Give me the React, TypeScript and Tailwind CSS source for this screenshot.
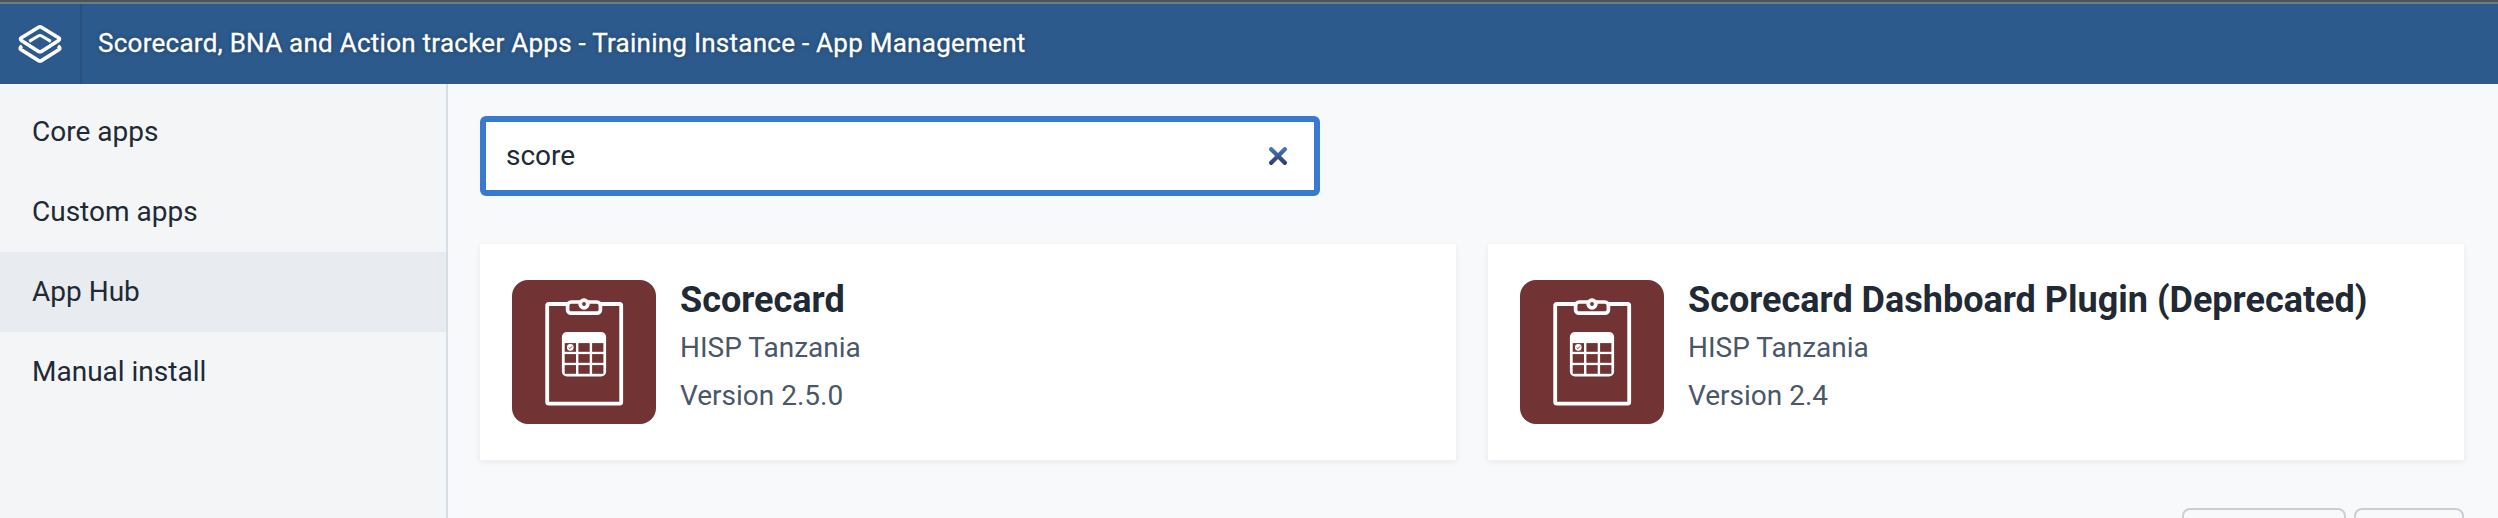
import React from "react";

const navItems = ["Core apps", "Custom apps", "App Hub", "Manual install"];
const apps = [
  { name: "Scorecard", author: "HISP Tanzania", version: "Version 2.5.0" },
  { name: "Scorecard Dashboard Plugin (Deprecated)", author: "HISP Tanzania", version: "Version 2.4" },
];

function Logo() {
  return (
    <svg width="48" height="48" viewBox="16 20 48 48" fill="none" stroke="#fff" strokeWidth="3.6" strokeLinejoin="round">
      <path d="M38.6 27.2Q40 26.4 41.4 27.2L58.6 37.8Q60.4 39.1 58.6 40.4L41.4 51.4Q40 52.2 38.6 51.4L21.4 40.4Q19.6 39.1 21.4 37.8Z" />
      <path d="M29.2 41.4L38.8 35.7Q40 35.1 41.2 35.7L50.8 41.4" strokeWidth="3" />
      <path d="M22 46Q18.8 48.2 21.2 49.8L38.6 60.6Q40 61.4 41.4 60.6L58.8 49.8Q61.2 48.2 58 46" />
    </svg>
  );
}

function ScorecardIcon() {
  const cols = [52.7, 66.4, 80.1];
  const rows = [63.1, 74.1, 85.1];
  return (
    <svg className="shrink-0" width="144" height="144" viewBox="0 0 144 144">
      <rect width="144" height="144" rx="16" fill="#713333" />
      <rect x="35.2" y="24" width="74" height="99.7" rx="1.6" fill="none" stroke="#fff" strokeWidth="3.8" />
      <rect x="55.6" y="22" width="32.8" height="11.2" rx="3.4" fill="#713333" stroke="#fff" strokeWidth="3.7" />
      <circle cx="72" cy="24" r="3.8" fill="#713333" stroke="#fff" strokeWidth="3.8" />
      <rect x="49.9" y="52" width="44.2" height="44.4" rx="5" fill="#fff" />
      {rows.map((y) => cols.map((x) => <rect key={`${x}-${y}`} x={x} y={y} width="11.3" height="8.7" fill="#713333" />))}
      <circle cx="58.3" cy="67.4" r="3.3" fill="#fff" />
      <path d="M56.6 67.5l1.2 1.2 2.3-2.5" fill="none" stroke="#713333" strokeWidth="0.9" />
    </svg>
  );
}

export default function App() {
  return (
    <div className="flex h-[518px] w-full flex-col overflow-hidden bg-[#f8f9fb] font-['Roboto',sans-serif] text-[28px] text-[#212934]">
      <header className="flex h-[84px] shrink-0 border-t-2 border-[#48555c] bg-[#2c5a8c]">
        <div className="flex w-full border-t-2 border-[#6f7d7f]">
          <div className="flex w-[82px] items-center justify-center border-r-2 border-[#28517e]">
            <Logo />
          </div>
          <h1 className="flex items-center pb-0.5 pl-4 text-[26px] font-normal tracking-[0.01em] text-white [-webkit-text-stroke:0.3px_white] [text-shadow:0_0_4px_rgba(0,0,0,0.35)]">
            Scorecard, BNA and Action tracker Apps - Training Instance - App Management
          </h1>
        </div>
      </header>
      <div className="flex min-h-0 flex-1">
        <nav className="w-[448px] shrink-0 border-r-2 border-[#d5dde5] bg-[#f3f5f7] pt-2">
          {navItems.map((item) => (
            <a key={item} className={item === "App Hub" ? "flex h-20 items-center bg-[#e8ebf0] px-8" : "flex h-20 items-center px-8"}>
              {item}
            </a>
          ))}
        </nav>
        <main className="flex-1 pl-8 pr-[34px] pt-8">
          <div className="flex h-20 w-[840px] items-center justify-between rounded-md border-6 border-[#3a79d0] bg-white pl-5 pr-[27px]">
            <span>score</span>
            <svg width="18" height="18" viewBox="0 0 18 18" fill="none">
              <defs>
                <linearGradient id="clear" x1="0" y1="0" x2="0" y2="18" gradientUnits="userSpaceOnUse">
                  <stop stopColor="#4a7ac4" />
                  <stop offset="1" stopColor="#2b3966" />
                </linearGradient>
              </defs>
              <path d="M2.2 2.2l13.6 13.6M15.8 2.2L2.2 15.8" stroke="url(#clear)" strokeWidth="4.3" strokeLinecap="round" />
            </svg>
          </div>
          <div className="mt-12 grid grid-cols-2 gap-8">
            {apps.map((app) => (
              <article key={app.name} className="flex h-[216px] items-center gap-6 bg-white px-8 shadow-[0_2px_6px_rgba(33,41,52,0.08)]">
                <ScorecardIcon />
                <div className="h-[144px] leading-[48px] text-[#4a5768]">
                  <h2 className="-mt-1 mb-1 h-[44px] text-[36px] leading-[48px] font-bold text-[#212934]">{app.name}</h2>
                  <p>{app.author}</p>
                  <p>{app.version}</p>
                </div>
              </article>
            ))}
          </div>
          <div className="mt-12 flex justify-end gap-2">
            <button className="h-16 w-[164px] rounded-lg border-2 border-[#cbced4]" />
            <button className="h-16 w-[110px] rounded-lg border-2 border-[#cbced4]" />
          </div>
        </main>
      </div>
    </div>
  );
}
